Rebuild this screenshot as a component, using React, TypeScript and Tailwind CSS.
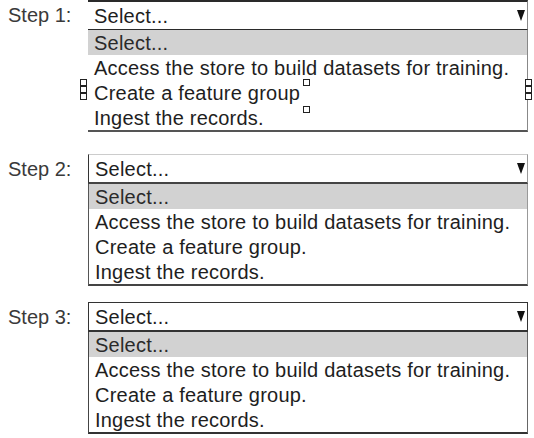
const options = [
  "Access the store to build datasets for training.",
  "Create a feature group.",
  "Ingest the records.",
];

function Caret() {
  return (
    <svg width="8" height="11" viewBox="0 0 8 11" className="shrink-0">
      <polygon points="0,0 8,0 4,11" fill="#111" />
    </svg>
  );
}

function Handle() {
  return <div className="w-[7px] h-[7px] border border-[#222] bg-white" />;
}

function StepSelect({
  label,
  items,
  selectClass,
  listClass,
  wrapClass,
}: {
  label: string;
  items: string[];
  selectClass: string;
  listClass: string;
  wrapClass: string;
}) {
  return (
    <div className={`flex ${wrapClass}`}>
      <div className="w-[88px] h-[30px] pl-[8px] flex items-center text-[20px] text-[#3a3a3a]">
        {label}
      </div>
      <div className="w-[440px] flex flex-col text-[20px] tracking-[0.22px] text-[#1e1e1e]">
        <div className={`h-[30px] pl-[6px] pr-[2px] flex items-center justify-between bg-white ${selectClass}`}>
          <span>Select...</span>
          <Caret />
        </div>
        <div className={`flex flex-col ${listClass}`}>
          <div className="h-[25px] pl-[6px] flex items-center bg-[#d2d2d2] text-[#2a2a2a]">
            Select...
          </div>
          {items.map((o) => (
            <div key={o} className="h-[25px] pl-[6px] flex items-center">
              {o}
            </div>
          ))}
        </div>
      </div>
    </div>
  );
}

export default function App() {
  return (
    <div
      className="relative w-[534px] h-[438px] bg-white overflow-hidden leading-[24px]"
      style={{ fontFamily: '"Liberation Sans", Arial, sans-serif' }}
    >
      <StepSelect
        label="Step 1:"
        items={[options[0], "Create a feature group", options[2]]}
        wrapClass="mb-[22px]"
        selectClass="border-t-2 border-r border-b border-[#2a2a2a] border-r-[#888]"
        listClass="border-r border-b-2 border-r-[#888] border-b-[#555]"
      />
      <StepSelect
        label="Step 2:"
        items={options}
        wrapClass="mb-[16px]"
        selectClass="border-l border-r border-t border-b-2 border-l-[#333] border-t-[#ccc] border-r-[#999] border-b-[#444]"
        listClass="border-l border-r border-b-2 border-l-[#555] border-r-[#999] border-b-[#444]"
      />
      <StepSelect
        label="Step 3:"
        items={options}
        wrapClass=""
        selectClass="border border-b-2 border-[#333]"
        listClass="border-l border-r border-b-2 border-l-[#444] border-r-[#666] border-b-[#333]"
      />

      {/* selection handles left over the step 1 list */}
      <div className="absolute left-[80px] top-[79px] flex flex-col gap-[0px]">
        <Handle />
        <Handle />
        <Handle />
      </div>
      <div className="absolute left-[303px] top-[79px] h-[34px] flex flex-col justify-between">
        <Handle />
        <Handle />
      </div>
      <div className="absolute left-[525px] top-[79px] flex flex-col">
        <Handle />
        <Handle />
        <Handle />
      </div>
    </div>
  );
}
